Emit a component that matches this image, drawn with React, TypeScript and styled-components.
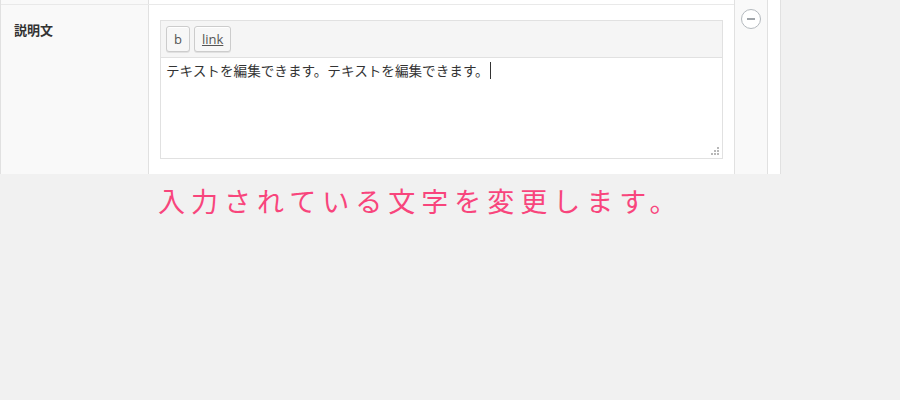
import React from "react";
import styled, { createGlobalStyle } from "styled-components";

const GlobalStyle = createGlobalStyle`
  html, body {
    margin: 0;
    padding: 0;
    background: #f1f1f1;
  }
  body {
    font-family: "Open Sans", "Noto Sans CJK JP", sans-serif;
    color: #444;
  }
`;

const Page = styled.div`
  display: flex;
  flex-direction: column;
  width: 900px;
  height: 400px;
`;

const Panel = styled.div`
  display: flex;
  width: 779px;
  background: #fff;
  border-left: 1px solid #e1e1e1;
  border-right: 1px solid #e1e1e1;
`;

const Fields = styled.div`
  display: flex;
  flex-direction: column;
  width: 733px;
`;

const PrevRow = styled.div`
  height: 4px;
  display: flex;
  border-bottom: 1px solid #e9e9e9;
`;

const Row = styled.div`
  display: flex;
  height: 169px;
`;

const Label = styled.div<{ $empty?: boolean }>`
  width: ${(p) => (p.$empty ? "147px" : "134px")};
  padding: ${(p) => (p.$empty ? "0" : "15px 0 0 13px")};
  background: #f9f9f9;
  border-right: 1px solid #e1e1e1;
  font-family: "Noto Sans CJK JP", sans-serif;
  font-size: 13px;
  font-weight: 700;
  color: #333;
  line-height: 20px;
`;

const Content = styled.div`
  flex: 1;
  padding: 15px 11px 0 11px;
`;

const Editor = styled.div`
  border: 1px solid #e1e1e1;
  display: flex;
  flex-direction: column;
`;

const Toolbar = styled.div`
  display: flex;
  gap: 4px;
  height: 37px;
  padding: 5px 0 0 5px;
  box-sizing: border-box;
  background: #f5f5f5;
  border-bottom: 1px solid #e1e1e1;
`;

const ToolButton = styled.button<{ $link?: boolean }>`
  height: 26px;
  padding: 0 7px;
  margin: 0;
  background: #f7f7f7;
  border: 1px solid #cccccc;
  border-radius: 3px;
  box-shadow: inset 0 1px 0 #fff, 0 1px 0 rgba(0, 0, 0, 0.08);
  font-family: "Open Sans", sans-serif;
  font-size: 13px;
  color: #555;
  text-decoration: ${(p) => (p.$link ? "underline" : "none")};
  line-height: 24px;
  cursor: pointer;
`;

const TextArea = styled.div`
  position: relative;
  height: 100px;
  padding: 2px 5px;
  box-sizing: border-box;
  font-family: "Noto Sans CJK JP", sans-serif;
  font-size: 13.6px;
  line-height: 20px;
  color: #333;
`;

const Caret = styled.span`
  display: inline-block;
  width: 1px;
  height: 17px;
  margin-left: 1px;
  background: #333;
  vertical-align: -3px;
`;

const Grip = styled.svg`
  position: absolute;
  right: 3px;
  bottom: 3px;
`;

const Handle = styled.div`
  width: 32px;
  display: flex;
  justify-content: center;
  padding-top: 9px;
  background: #f9f9f9;
  border-left: 1px solid #e1e1e1;
  border-right: 1px solid #e1e1e1;
`;

const RemoveButton = styled.div`
  width: 18px;
  height: 18px;
  border: 1px solid #b4b9be;
  border-radius: 50%;
  background: #fff;
  display: flex;
  align-items: center;
  justify-content: center;
  &::after {
    content: "";
    width: 8px;
    height: 1.5px;
    background: #a0a5aa;
  }
`;

const Spacer = styled.div`
  flex: 1;
`;

const Caption = styled.div`
  margin: 7px 0 0 158px;
  font-family: "Noto Sans CJK JP", sans-serif;
  font-size: 27px;
  letter-spacing: 6px;
  line-height: 40px;
  color: #f8457c;
`;

export default function App() {
  return (
    <Page>
      <GlobalStyle />
      <Panel>
        <Fields>
          <PrevRow>
            <Label $empty />
          </PrevRow>
          <Row>
            <Label>説明文</Label>
            <Content>
              <Editor>
                <Toolbar>
                  <ToolButton>b</ToolButton>
                  <ToolButton $link>link</ToolButton>
                </Toolbar>
                <TextArea>
                  テキストを編集できます。テキストを編集できます。
                  <Caret />
                  <Grip width="8" height="8" viewBox="0 0 8 8">
                    <rect x="6" y="0" width="2" height="2" fill="#b8b8b8" />
                    <rect x="3" y="3" width="2" height="2" fill="#b8b8b8" />
                    <rect x="6" y="3" width="2" height="2" fill="#b8b8b8" />
                    <rect x="0" y="6" width="2" height="2" fill="#b8b8b8" />
                    <rect x="3" y="6" width="2" height="2" fill="#b8b8b8" />
                    <rect x="6" y="6" width="2" height="2" fill="#b8b8b8" />
                  </Grip>
                </TextArea>
              </Editor>
            </Content>
          </Row>
        </Fields>
        <Handle>
          <RemoveButton />
        </Handle>
        <Spacer />
      </Panel>
      <Caption>入力されている文字を変更します。</Caption>
    </Page>
  );
}
